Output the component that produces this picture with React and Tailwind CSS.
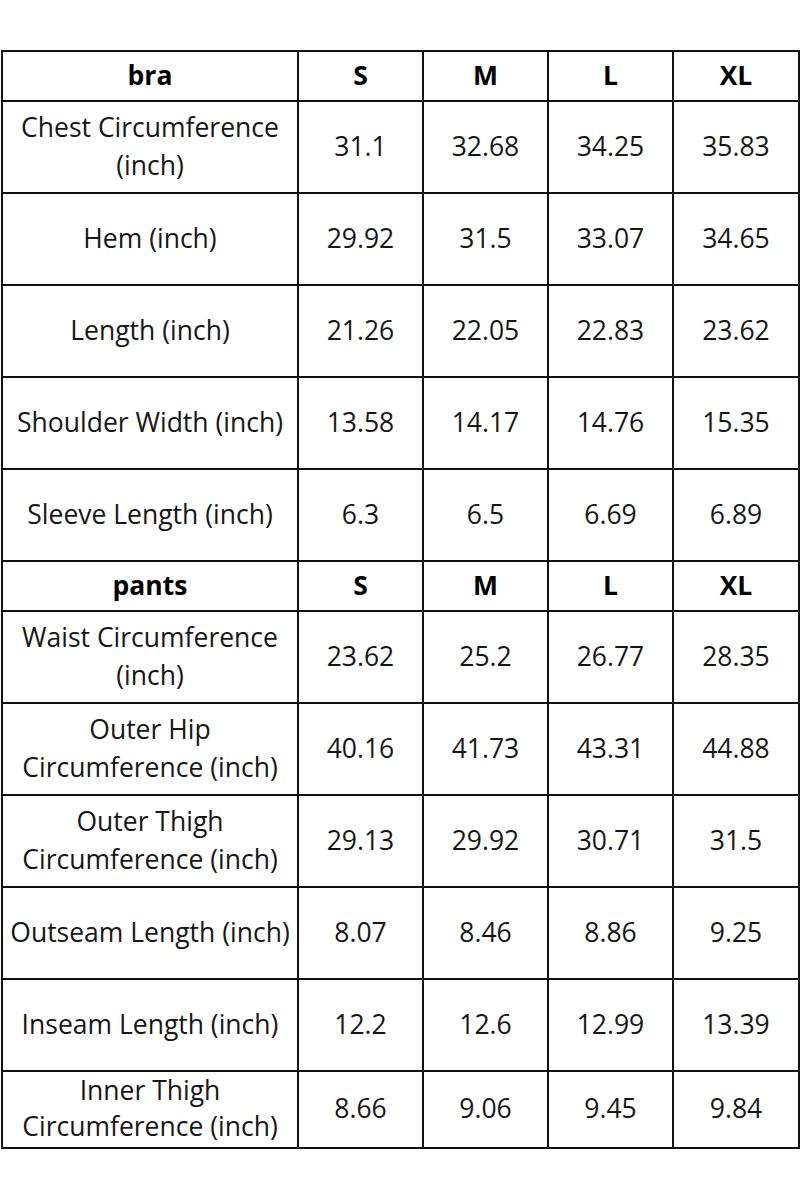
const SECTIONS = [
  {
    name: 'bra',
    rows: [
      ['Chest Circumference (inch)', '31.1', '32.68', '34.25', '35.83'],
      ['Hem (inch)', '29.92', '31.5', '33.07', '34.65'],
      ['Length (inch)', '21.26', '22.05', '22.83', '23.62'],
      ['Shoulder Width (inch)', '13.58', '14.17', '14.76', '15.35'],
      ['Sleeve Length (inch)', '6.3', '6.5', '6.69', '6.89'],
    ],
  },
  {
    name: 'pants',
    rows: [
      ['Waist Circumference (inch)', '23.62', '25.2', '26.77', '28.35'],
      ['Outer Hip Circumference (inch)', '40.16', '41.73', '43.31', '44.88'],
      ['Outer Thigh Circumference (inch)', '29.13', '29.92', '30.71', '31.5'],
      ['Outseam Length (inch)', '8.07', '8.46', '8.86', '9.25'],
      ['Inseam Length (inch)', '12.2', '12.6', '12.99', '13.39'],
      ['Inner Thigh Circumference (inch)', '8.66', '9.06', '9.45', '9.84', true],
    ],
  },
];

const cell = 'border-2 border-[#111] text-center align-middle px-1 pb-[3px]';

export default function App() {
  return (
    <div className="w-[800px] h-[1200px] bg-white pt-[50px] pl-px" style={{ fontFamily: '"Open Sans", "Noto Sans", sans-serif' }}>
      <table className="w-[797px] table-fixed border-collapse text-[26.5px] leading-[38px] text-[#161616]">
        <colgroup>
          <col className="w-[296px]" />
          <col className="w-[125px]" />
          <col className="w-[125px]" />
          <col className="w-[125px]" />
          <col className="w-[126px]" />
        </colgroup>
        <tbody>
          {SECTIONS.map(section => (
            <>
              <tr key={section.name} className="h-[50px] font-bold text-black">
                <td className={cell}>{section.name}</td>
                <td className={cell}>S</td>
                <td className={cell}>M</td>
                <td className={cell}>L</td>
                <td className={cell}>XL</td>
              </tr>
              {section.rows.map(r => (
                <tr key={r[0]} className={r[5] ? 'h-[76px] leading-[36px]' : 'h-[92px]'}>
                  <td className={cell}>{r[0]}</td>
                  <td className={cell}>{r[1]}</td>
                  <td className={cell}>{r[2]}</td>
                  <td className={cell}>{r[3]}</td>
                  <td className={cell}>{r[4]}</td>
                </tr>
              ))}
            </>
          ))}
        </tbody>
      </table>
    </div>
  );
}
